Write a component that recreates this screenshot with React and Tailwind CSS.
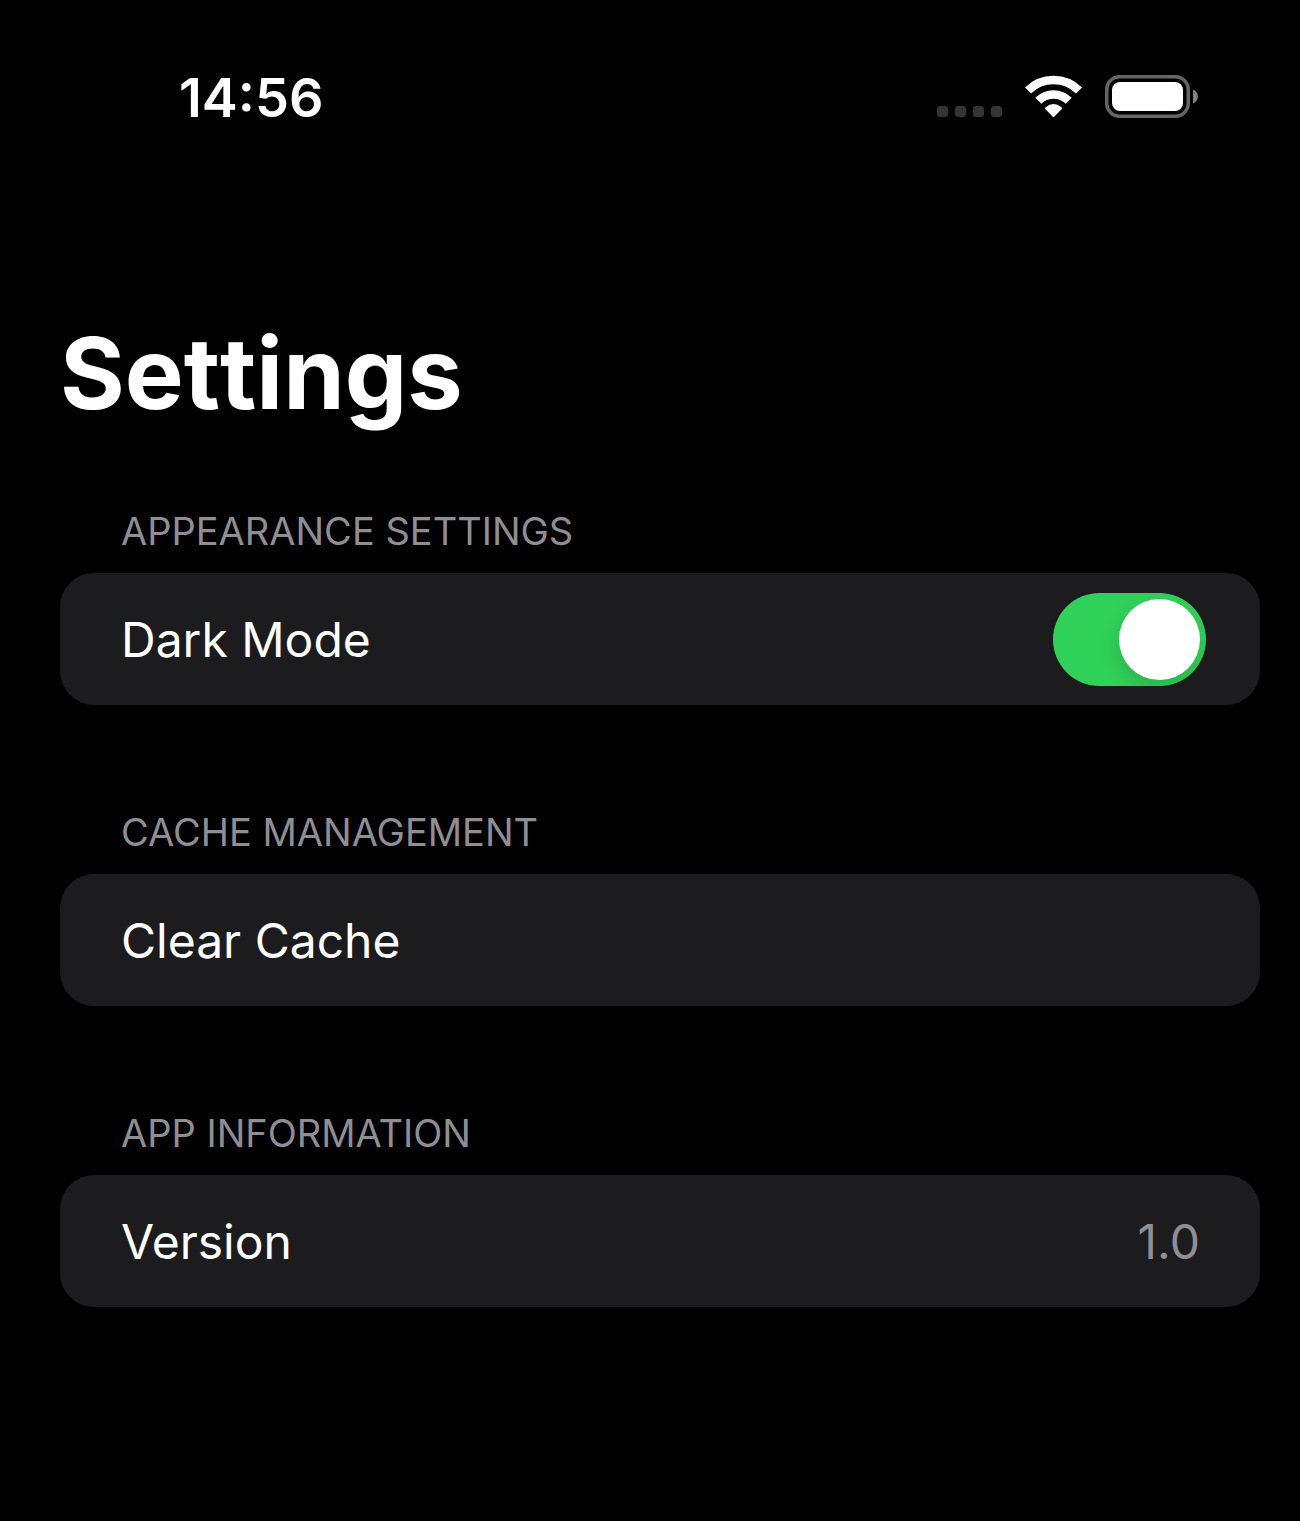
import { useState } from "react";

function StatusBar() {
  return (
    <header className="flex h-[196px] items-center justify-between pr-[101px] pl-[179px]">
      <time className="text-[54px] leading-[64px] font-semibold">14:56</time>
      <div className="flex items-end gap-[22px] pb-1">
        <svg width="66" height="12" viewBox="0 0 66 12" fill="#343434" aria-hidden="true">
          <rect x="0" width="11" height="11" rx="3.2" />
          <rect x="18" width="11" height="11" rx="3.2" />
          <rect x="36" width="11" height="11" rx="3.2" />
          <rect x="54" width="11" height="11" rx="3.2" />
        </svg>
        <svg width="58" height="43" viewBox="0 0 58 43" fill="none" stroke="#fff" strokeWidth="8.6" aria-hidden="true">
          <path d="M3 15.5a36.2 36.2 0 0 1 51 0" />
          <path d="M13.3 25.8a21.5 21.5 0 0 1 30.4 0" />
          <path d="M28.5 41L21 33.2Q28.5 26.8 36 33.2Z" fill="#fff" strokeWidth="2" strokeLinejoin="round" />
        </svg>
        <svg width="94" height="43" viewBox="0 0 94 43" aria-hidden="true">
          <rect x="1.75" y="1.75" width="81.5" height="39.5" rx="13" fill="none" stroke="#656565" strokeWidth="3.5" />
          <rect x="7" y="7" width="71" height="29" rx="8" fill="#fff" />
          <path d="M88 14.5c6.5 2.5 6.5 11.5 0 14Z" fill="#808080" />
        </svg>
      </div>
    </header>
  );
}

function Section({ title, children }) {
  return (
    <section>
      <h2 className="px-[61px] pb-[18px] text-[38px] leading-[48px] text-[#8e8e93]">{title}</h2>
      <div className="flex h-[132px] items-center justify-between rounded-[34px] bg-[#1c1c1e] pr-[54px] pl-[61px] text-[48px] leading-[60px]">
        {children}
      </div>
    </section>
  );
}

export default function App() {
  const [dark, setDark] = useState(true);
  return (
    <div className="min-h-screen bg-black font-['Inter',sans-serif] text-white">
      <StatusBar />
      <main className="pt-[115px] pr-10 pl-[60px]">
        <h1 className="text-[99px] leading-[124px] font-bold [font-kerning:none]">Settings</h1>
        <div className="flex flex-col gap-[103px] pt-[72px]">
          <Section title="APPEARANCE SETTINGS">
            <label htmlFor="dark-mode" className="pt-[2px]">Dark Mode</label>
            <input
              id="dark-mode"
              type="checkbox"
              role="switch"
              checked={dark}
              onChange={(e) => setDark(e.target.checked)}
              className="h-[93px] w-[153px] appearance-none overflow-hidden rounded-full bg-[#39393d] p-[6px] before:block before:size-[81px] before:rounded-full before:bg-white before:shadow-[0_8px_20px_rgba(0,0,0,0.15)] checked:bg-[#30d158] checked:before:ml-[60px]"
            />
          </Section>
          <Section title="CACHE MANAGEMENT">
            <button type="button" className="flex-1 pt-[2px] text-left">Clear Cache</button>
          </Section>
          <Section title="APP INFORMATION">
            <span className="pt-[2px]">Version</span>
            <span className="pt-[2px] pr-[6px] text-[#8e8e93]">1.0</span>
          </Section>
        </div>
      </main>
    </div>
  );
}
